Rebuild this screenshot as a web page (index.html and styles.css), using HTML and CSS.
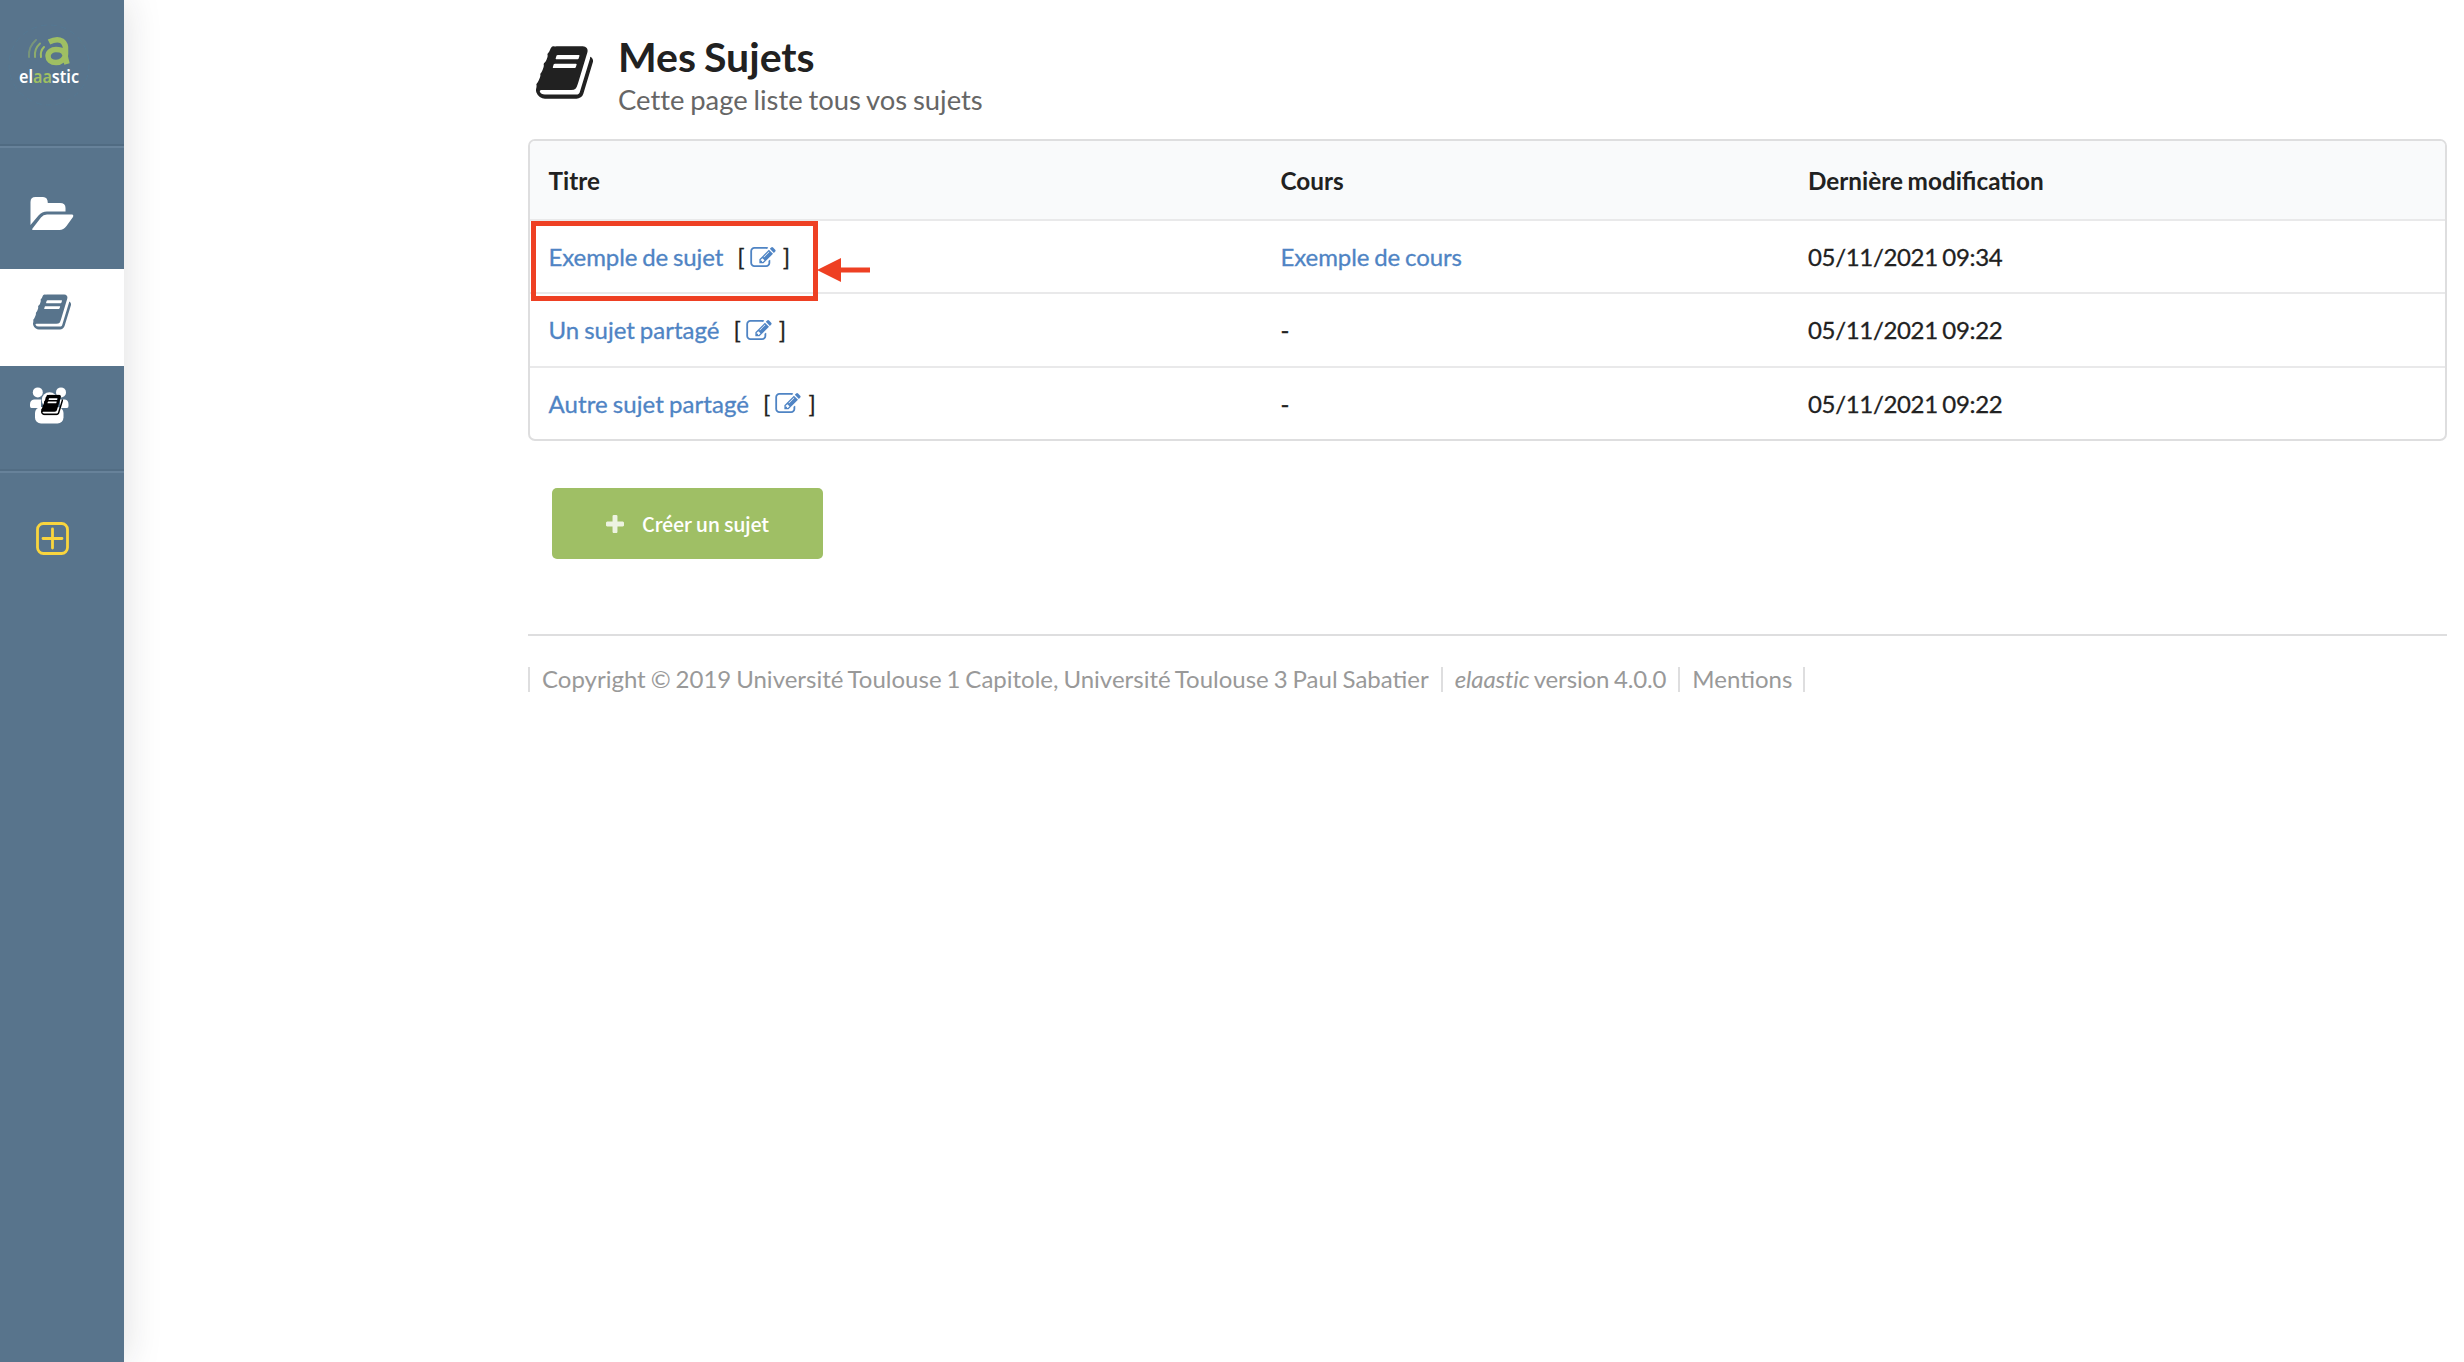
FILE: index.html
```html
<!DOCTYPE html>
<html lang="fr">
<head>
<meta charset="utf-8">
<title>Mes Sujets - elaastic</title>
<link rel="stylesheet" href="styles.css">
</head>
<body>
<svg class="defs" width="0" height="0" aria-hidden="true">
  <symbol id="book" viewBox="0 128 1664 1536"><path d="M1639 478q40 57 18 129l-275 906q-19 64-76.5 107.5t-122.5 43.5h-923q-77 0-148.5-53.5t-99.5-131.5q-24-67-2-127 0-4 3-27t4-37q1-8-3-21.5t-3-19.5q2-11 8-21t16.500-23.500 16.500-23.500q23-38 45-91.500t30-91.500q3-10 .5-30t-.5-28q3-11 17-28t17-23q21-36 42-92t25-90q1-9-2.500-32t.5-28q4-13 22-30.500t22-22.500q19-26 42.500-84.500t27.500-96.500q1-8-3-25.500t-2-26.500q2-8 9-18t18-23 17-21q8-12 16.500-30.500t15-35 16-36 19.500-32 26.500-23.500 36-11.500 47.500 5.500l-1 3q38-9 51-9h761q74 0 114 56t18 130l-274 906q-36 119-71.500 153.500t-128.500 34.500h-869q-27 0-38 15-11 16-1 43 24 70 144 70h923q29 0 56-15.500t35-41.500l300-987q7-22 5-57 38 15 59 43zm-1064 2q-4 13 2 22.500t20 9.500h608q13 0 25.500-9.500t16.500-22.500l21-64q4-13-2-22.500t-20-9.500h-608q-13 0-25.500 9.500t-16.500 22.500zm-83 256q-4 13 2 22.500t20 9.500h608q13 0 25.500-9.500t16.500-22.500l21-64q4-13-2-22.500t-20-9.500h-608q-13 0-25.500 9.500t-16.500 22.500z"/></symbol>
  <symbol id="edit" viewBox="0 128 1792 1408"><path d="M888 1184l116-116-152-152-116 116v56h96v96h56zm440-720q-16-16-33 1l-350 350q-17 17-1 33t33-1l350-350q17-17 1-33zm80 594v190q0 119-84.500 203.500t-203.500 84.500h-832q-119 0-203.500-84.500t-84.500-203.500v-832q0-119 84.500-203.500t203.500-84.500h832q63 0 117 25 15 7 18 23 3 17-9 29l-49 49q-14 14-32 8-23-6-45-6h-832q-66 0-113 47t-47 113v832q0 66 47 113t113 47h832q66 0 113-47t47-113v-126q0-13 9-22l64-64q15-15 35-7t20 29zm-96-738l288 288-672 672h-288v-288zm444 132l-92 92-288-288 92-92q28-28 68-28t68 28l152 152q28 28 28 68t-28 68z"/></symbol>
</svg>
<div class="app">
  <nav class="sidebar">
    <a class="item item-logo">
      <svg width="124" height="145" viewBox="0 0 124 145">
        <circle class="ring" cx="49" cy="65" r="40"/>
        <g class="wave"><path opacity=".45" d="M36 40Q28 47 29 57"/><path opacity=".75" d="M40 43.500Q34 49 35 57"/><path d="M44 47Q40 51 41 57"/></g>
        <path class="glyph" d="M49 42Q57 38 62 41Q66 44 65.500 50V54C65.500 59 61 62.500 56 62.500C51 62.500 48 59.500 48 56C48 52 52 49.500 56 49.500C63 49.500 65 52 65.500 58L67 64"/>
        <text class="word" x="19" y="82.700" textLength="60" lengthAdjust="spacingAndGlyphs">el<tspan class="green">aa</tspan>stic</text>
      </svg>
    </a>
    <a class="item item-folder">
      <svg width="44" height="34" viewBox="0 0 44 34"><path d="M.5 28V5Q.5 0 5.500 0H13Q17.800 0 17.800 6H30Q35.500 6 35.500 11V14.500H17Q12 14.500 8.500 18.500Z"/><path d="M2.500 31.500L11 20.500Q13.300 17.500 17 17.500H42Q44 18 43 20L36.500 29Q33.500 33 29.500 33H3.500Q1.500 33 2.500 31.500Z"/></svg>
    </a>
    <a class="item item-subjects active"><svg width="38" height="36"><use href="#book"/></svg></a>
    <a class="item item-shared">
      <svg width="40" height="37" viewBox="0 0 40 37">
        <circle cx="7.800" cy="5.400" r="5"/><circle cx="31" cy="5.400" r="5"/>
        <path d="M4 12.500H11V21H1.500Q0 21 0 19V17.500Q0 13 4 12.500ZM35 12.500H30V21H37Q38.500 21 38.500 19V17.500Q38.500 13 35 12.500Z"/>
        <circle cx="19.500" cy="13" r="7.800"/><rect x="5" y="20" width="28.500" height="16.500" rx="6"/>
        <use class="black" href="#book" x="11" y="7.500" width="22" height="21"/>
      </svg>
    </a>
    <a class="item item-add"><svg width="34" height="34" viewBox="0 0 34 34"><rect x="1.500" y="1.500" width="30" height="30" rx="6"/><path d="M16.500 7V26M7 16.500H26"/></svg></a>
  </nav>
  <main class="content">
    <header class="page-header">
      <svg class="header-icon" width="57" height="53"><use href="#book"/></svg>
      <div class="heading"><h1>Mes Sujets</h1><p>Cette page liste tous vos sujets</p></div>
    </header>
    <div class="table">
      <div class="row head"><div>Titre</div><div>Cours</div><div>Dernière modification</div></div>
      <div class="row">
        <div><a class="tight">Exemple de sujet</a><span class="edit">[<svg width="26" height="20"><use href="#edit"/></svg>]</span></div>
        <div><a class="tight">Exemple de cours</a></div><div class="date">05/11/2021 09:34</div>
        <span class="frame"></span>
        <svg class="arrow" width="53" height="24" viewBox="0 0 53 24"><path d="M0 12L24 0V9.500H53V14.500H24V24Z"/></svg>
      </div>
      <div class="row">
        <div><a>Un sujet partagé</a><span class="edit">[<svg width="26" height="20"><use href="#edit"/></svg>]</span></div>
        <div>-</div><div class="date">05/11/2021 09:22</div>
      </div>
      <div class="row">
        <div><a class="wide">Autre sujet partagé</a><span class="edit">[<svg width="26" height="20"><use href="#edit"/></svg>]</span></div>
        <div>-</div><div class="date">05/11/2021 09:22</div>
      </div>
    </div>
    <button class="create"><svg width="18" height="18" viewBox="192 192 1408 1408"><path d="M1600 800v192q0 40-28 68t-68 28h-416v416q0 40-28 68t-68 28h-192q-40 0-68-28t-28-68v-416h-416q-40 0-68-28t-28-68v-192q0-40 28-68t68-28h416v-416q0-40 28-68t68-28h192q40 0 68 28t28 68v416h416q40 0 68 28t28 68z"/></svg><span>Créer un sujet</span></button>
    <footer class="footer">
      <span>Copyright © 2019 Université Toulouse 1 Capitole, Université Toulouse 3 Paul Sabatier</span>
      <span class="version"><em>elaastic</em> version 4.0.0</span>
      <span>Mentions</span>
    </footer>
  </main>
</div>
</body>
</html>
```
FILE: styles.css
```css
* { box-sizing: border-box; }
body { margin: 0; background: #fff; color: #212121; font-family: Lato, sans-serif; font-size: 24px; word-spacing: -1.2px; }
svg { display: block; }
.defs { position: absolute; }
.app { display: flex; height: 1362px; overflow: hidden; }

.sidebar { width: 124px; flex: none; background: #58748c; fill: #fff; box-shadow: 0 0 36px rgba(34, 36, 38, .15); }
.item { display: flex; }
.item-logo { height: 148px; border-bottom: 2px solid #67829a; box-shadow: inset 0 -2px #506b82; }
.item-folder { height: 120.500px; padding: 49px 0 0 30px; }
.item-subjects { height: 97px; padding: 25.500px 0 0 33px; }
.item-shared { height: 107.500px; padding: 21.500px 0 0 30px; border-bottom: 2px solid #67829a; box-shadow: inset 0 -2px #526d84; }
.item-add { padding: 49px 0 0 36px; }
.item-add svg { fill: none; stroke: #f9d53e; stroke-width: 2.8; stroke-linecap: round; }
.active { background: #fff; fill: #58748c; }
.black { fill: #000; }
.ring { fill: none; stroke: #557892; stroke-dasharray: 6 4; }
.wave { fill: none; stroke: #9fbf63; stroke-width: 2; stroke-linecap: round; }
.glyph { fill: none; stroke: #9fbf63; stroke-width: 5.5; }
.word { font: 600 17px "Noto Sans", sans-serif; }
.green { fill: #9fbf63; }

.content { width: 1919px; margin-left: 404px; }
.page-header { display: flex; height: 139px; padding: 36px 0 0 8px; }
.header-icon { margin-top: 10px; fill: #212121; }
.heading { margin-left: 25px; white-space: nowrap; }
h1 { margin: 0; font-size: 41px; line-height: 42px; font-weight: 700; word-spacing: -2px; }
p { margin: 5px 0 0; font-size: 27.400px; line-height: 34px; color: #666; font-variant-ligatures: no-common-ligatures; }

.table { height: 302px; border: 2px solid #dededf; border-radius: 7px; }
.row { position: relative; display: grid; grid-template-columns: 732px 527.500px 1fr; height: 73.300px; border-top: 2px solid #e9e9ea; align-items: center; padding-left: 18.500px; white-space: nowrap; -webkit-text-stroke: .3px; }
.row > div { display: flex; align-items: center; }
.head { height: 78px; border-top: 0; border-radius: 5px 5px 0 0; background: #f9fafb; font-weight: 700; font-size: 24.300px; -webkit-text-stroke: 0; }
.tight { letter-spacing: -.09px; }
.wide { letter-spacing: .08px; }
.date { letter-spacing: -.33px; }
a { color: #4f84c4; }
.edit { display: flex; align-items: center; margin-left: 14px; }
.edit svg { margin: 0 7px 0 5px; fill: #4f84c4; }
.frame { position: absolute; left: 1px; top: 0; width: 287px; height: 80px; border: 5px solid #ee4023; z-index: 1; }
.arrow { position: absolute; left: 287px; top: 37px; fill: #ee4023; z-index: 1; }

.create { display: flex; align-items: center; width: 271px; height: 71px; margin: 47px 0 0 24px; padding: 0 0 0 54px; border: 0; border-radius: 5px; background: #9fbf65; color: #fff; font: 500 19.800px "Noto Sans CJK SC", sans-serif; letter-spacing: -.3px; white-space: nowrap; }
.create svg { fill: #edf3e1; }
.create span { margin-left: 18px; }
.footer { display: flex; margin-top: 75px; padding-top: 31px; border-top: 2px solid #dededf; color: #999; line-height: 24px; white-space: nowrap; }
.footer span { height: 25px; padding: 0 12px; border-left: 2px solid #dededf; }
.footer .version { letter-spacing: -.15px; }
.footer span:last-child { padding-right: 11px; border-right: 2px solid #dededf; }
```
